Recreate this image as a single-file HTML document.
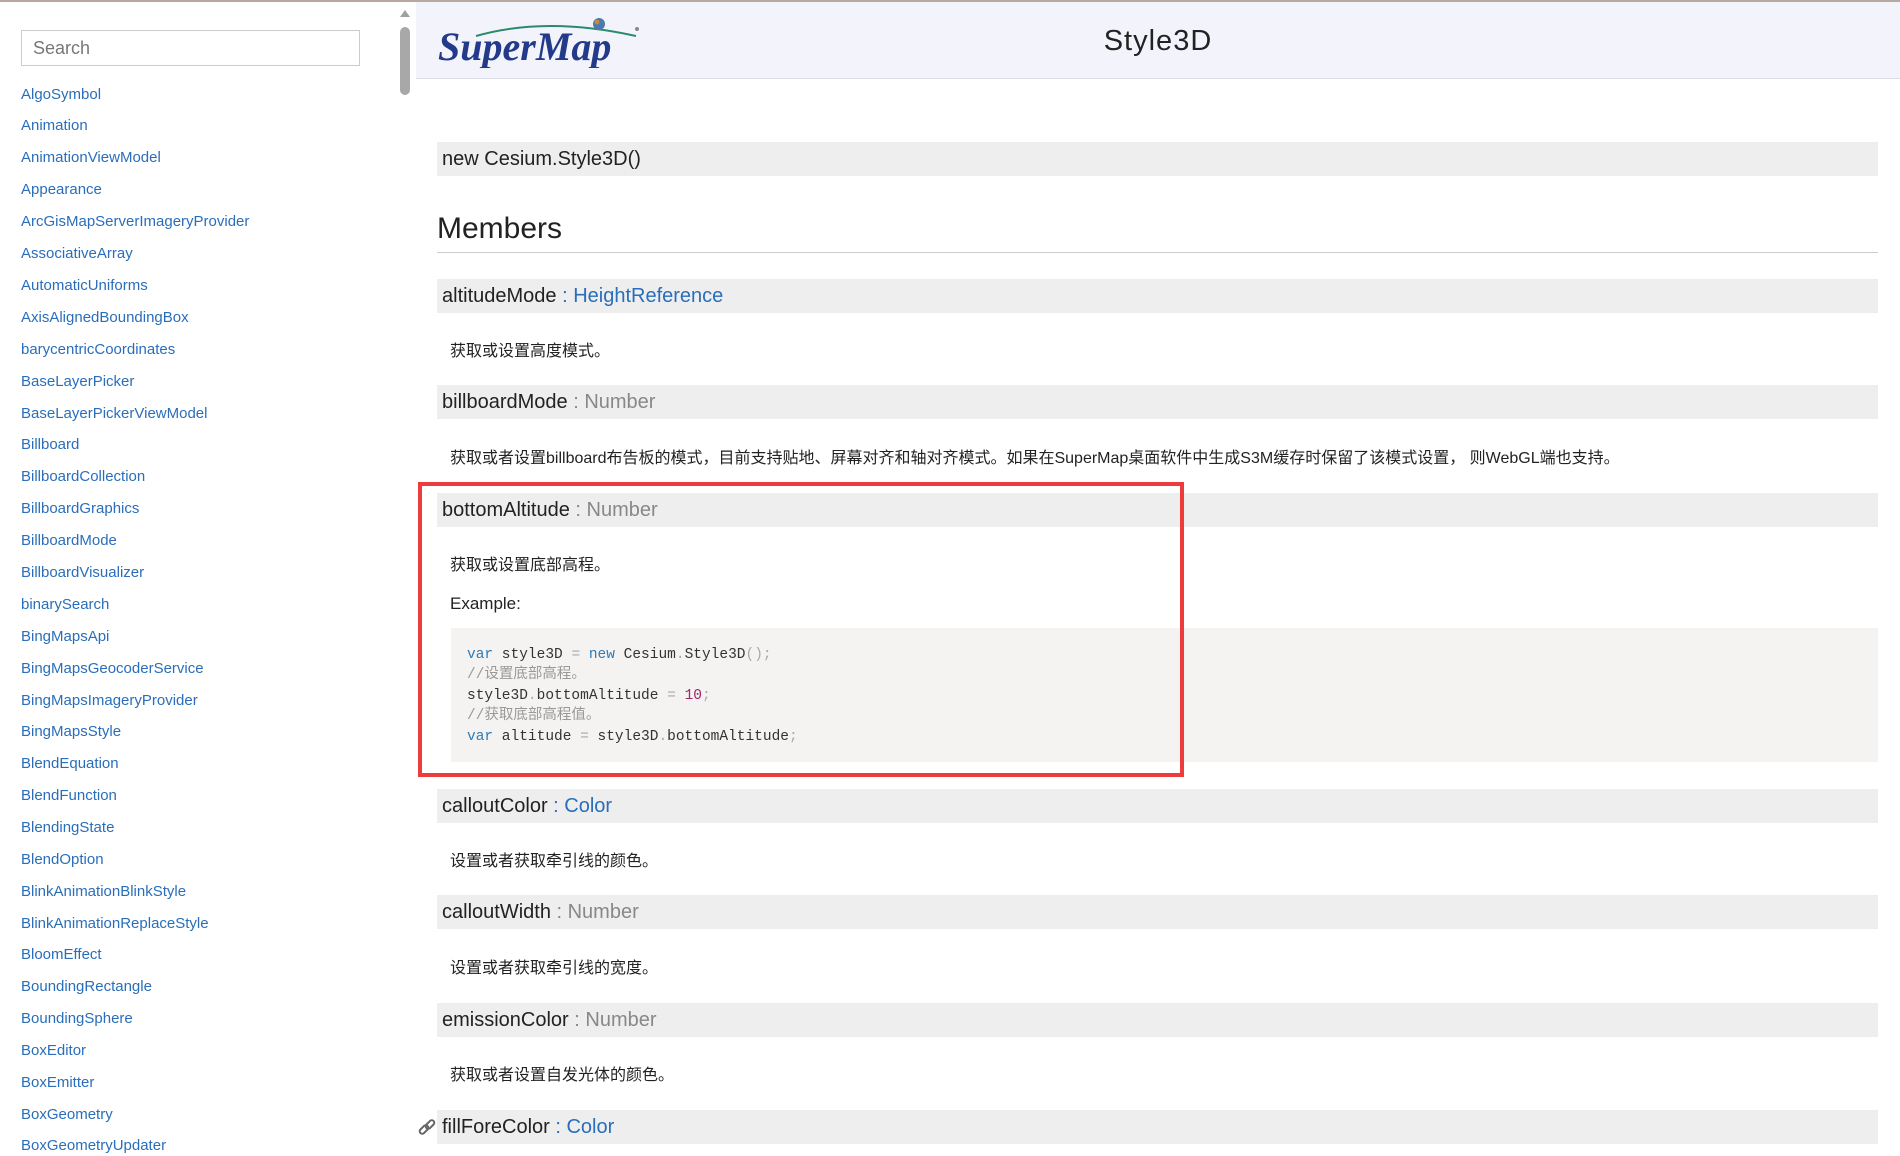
<!DOCTYPE html>
<html><head><meta charset="utf-8"><style>
body{margin:0;width:1900px;height:1153px;overflow:hidden;background:#fff;font-family:"Liberation Sans","Noto Sans CJK SC",sans-serif;position:relative}
.topline{position:absolute;left:0;top:0;width:1900px;height:2px;background:#b8a8a0}
.search{position:absolute;left:21px;top:30px;width:339px;height:36px;border:1px solid #ccc;box-sizing:border-box;font-size:18px;color:#777;padding:7px 11px}
.nav a{position:absolute;left:21px;color:#2a6ebb;font-size:15px;text-decoration:none;line-height:20px}
.sb{position:absolute;left:400px;top:27px;width:10px;height:68px;border-radius:5px;background:#a8a8a8}
.arr{position:absolute;left:400px;top:10px;width:0;height:0;border-left:5px solid transparent;border-right:5px solid transparent;border-bottom:7px solid #a0a0a0}
.hdr{position:absolute;left:416px;top:2px;width:1484px;height:76px;background:#f3f4fb;border-bottom:1px solid #dcdde6}
.title{position:absolute;left:1000px;width:316px;text-align:center;top:25px;font-size:29px;color:#222;letter-spacing:1px}
.logo{position:absolute;left:436px;top:16px}
.bar{position:absolute;left:437px;width:1441px;height:34px;background:#eeeeee;font-size:20px;color:#222;line-height:34px;padding-left:5px;box-sizing:border-box}
.bar .t{color:#888}.bar .l{color:#2a6ebb}
.desc{position:absolute;left:450px;font-size:16px;color:#222}
.code{position:absolute;left:451px;top:628px;width:1427px;height:134px;background:#f4f3f2;font-family:"Liberation Mono","Noto Sans CJK SC",monospace;font-size:14.5px;line-height:20.4px;padding:17px 0 0 16px;box-sizing:border-box;color:#333;white-space:pre}
.k{color:#2f7bb5}.c{color:#999}.n{color:#a0226a}.p{color:#aaa}
.red{position:absolute;left:418px;top:482px;width:766px;height:295px;border:4px solid #ee3b3b;box-sizing:border-box}
</style></head><body>
<div class="topline"></div>
<div class="search">Search</div>
<div class="arr"></div><div class="sb"></div>
<div class="nav">
<a style="top:85px">AlgoSymbol</a>
<a style="top:116px">Animation</a>
<a style="top:148px">AnimationViewModel</a>
<a style="top:180px">Appearance</a>
<a style="top:212px">ArcGisMapServerImageryProvider</a>
<a style="top:244px">AssociativeArray</a>
<a style="top:276px">AutomaticUniforms</a>
<a style="top:308px">AxisAlignedBoundingBox</a>
<a style="top:340px">barycentricCoordinates</a>
<a style="top:372px">BaseLayerPicker</a>
<a style="top:404px">BaseLayerPickerViewModel</a>
<a style="top:435px">Billboard</a>
<a style="top:467px">BillboardCollection</a>
<a style="top:499px">BillboardGraphics</a>
<a style="top:531px">BillboardMode</a>
<a style="top:563px">BillboardVisualizer</a>
<a style="top:595px">binarySearch</a>
<a style="top:627px">BingMapsApi</a>
<a style="top:659px">BingMapsGeocoderService</a>
<a style="top:691px">BingMapsImageryProvider</a>
<a style="top:722px">BingMapsStyle</a>
<a style="top:754px">BlendEquation</a>
<a style="top:786px">BlendFunction</a>
<a style="top:818px">BlendingState</a>
<a style="top:850px">BlendOption</a>
<a style="top:882px">BlinkAnimationBlinkStyle</a>
<a style="top:914px">BlinkAnimationReplaceStyle</a>
<a style="top:945px">BloomEffect</a>
<a style="top:977px">BoundingRectangle</a>
<a style="top:1009px">BoundingSphere</a>
<a style="top:1041px">BoxEditor</a>
<a style="top:1073px">BoxEmitter</a>
<a style="top:1105px">BoxGeometry</a>
<a style="top:1136px">BoxGeometryUpdater</a>
</div>
<div class="hdr"></div>
<svg class="logo" width="210" height="52" viewBox="0 0 210 52">
<path d="M40 20 Q110 0 200 20" stroke="#2a8a6a" stroke-width="2" fill="none"/>
<circle cx="163" cy="8" r="6" fill="#4a7ab0"/><circle cx="161" cy="6" r="2.5" fill="#c98a3a"/>
<text x="2" y="44" font-family="Liberation Serif,serif" font-style="italic" font-weight="bold" font-size="40" fill="#233a8a">SuperMap</text>
<circle cx="201" cy="13" r="2" fill="#888"/>
</svg>
<div class="title">Style3D</div>
<div class="bar" style="top:142px">new Cesium.Style3D()</div>
<div style="position:absolute;left:437px;top:212px;font-size:30px;color:#222">Members</div>
<div style="position:absolute;left:437px;top:252px;width:1441px;height:1px;background:#ccc"></div>
<div class="bar" style="top:279px">altitudeMode <span class="l">: HeightReference</span></div>
<div class="desc" style="top:337px">获取或设置高度模式。</div>
<div class="bar" style="top:385px">billboardMode <span class="t">: Number</span></div>
<div class="desc" style="top:444px">获取或者设置billboard布告板的模式，目前支持贴地、屏幕对齐和轴对齐模式。如果在SuperMap桌面软件中生成S3M缓存时保留了该模式设置， 则WebGL端也支持。</div>
<div class="bar" style="top:493px">bottomAltitude <span class="t">: Number</span></div>
<div class="desc" style="top:551px">获取或设置底部高程。</div>
<div class="desc" style="top:594px;font-size:17px">Example:</div>
<div class="code"><span class="k">var</span> style3D <span class="p">=</span> <span class="k">new</span> Cesium<span class="p">.</span>Style3D<span class="p">();</span>
<span class="c">//设置底部高程。</span>
style3D<span class="p">.</span>bottomAltitude <span class="p">=</span> <span class="n">10</span><span class="p">;</span>
<span class="c">//获取底部高程值。</span>
<span class="k">var</span> altitude <span class="p">=</span> style3D<span class="p">.</span>bottomAltitude<span class="p">;</span></div>
<div class="red"></div>
<div class="bar" style="top:789px">calloutColor <span class="l">: Color</span></div>
<div class="desc" style="top:847px">设置或者获取牵引线的颜色。</div>
<div class="bar" style="top:895px">calloutWidth <span class="t">: Number</span></div>
<div class="desc" style="top:954px">设置或者获取牵引线的宽度。</div>
<div class="bar" style="top:1003px">emissionColor <span class="t">: Number</span></div>
<div class="desc" style="top:1061px">获取或者设置自发光体的颜色。</div>
<div class="bar" style="top:1110px">fillForeColor <span class="l">: Color</span></div>
<svg style="position:absolute;left:417px;top:1118px" width="20" height="20" viewBox="0 0 20 20"><g fill="none" stroke="#666" stroke-width="2"><rect x="2" y="9" width="10" height="5" rx="2.5" transform="rotate(-45 7 11.5)"/><rect x="8" y="4" width="10" height="5" rx="2.5" transform="rotate(-45 13 6.5)"/></g></svg>
</body></html>
